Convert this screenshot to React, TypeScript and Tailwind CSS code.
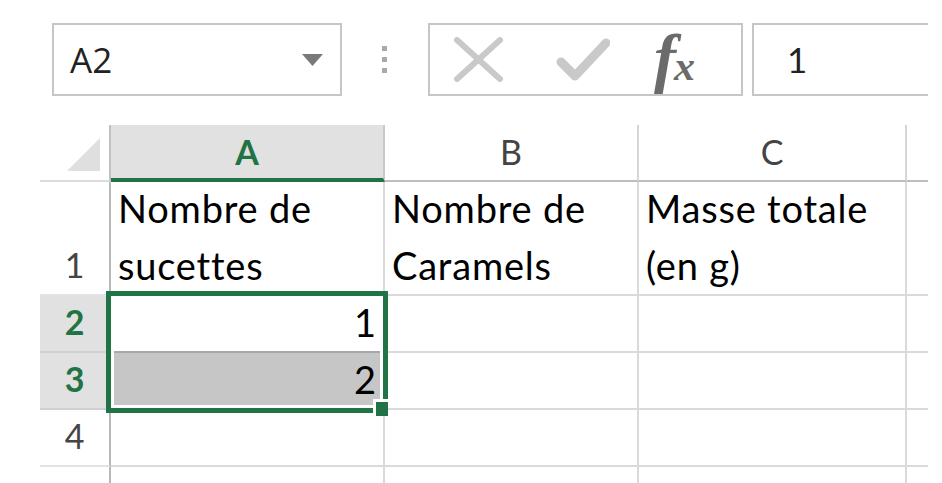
const cellFont = { fontFamily: "Lato, 'Noto Sans', sans-serif" };

function NameBox() {
  return (
    <div className="ml-[52px] flex h-[73px] w-[290px] shrink-0 items-center justify-between border-2 border-[#c6c6c6] pl-[16px] pr-[17px]">
      <span className="text-[35px] leading-none text-[#222]" style={{ fontFamily: "'Open Sans', sans-serif" }}>
        A2
      </span>
      <svg width="21" height="12" viewBox="0 0 21 12">
        <path d="M0 0h21l-10.5 12z" fill="#7a7a7a" />
      </svg>
    </div>
  );
}

function Grip() {
  return (
    <div className="ml-[40px] flex shrink-0 flex-col gap-[6px]">
      <span className="h-[5px] w-[5px] bg-[#a9a9a9]" />
      <span className="h-[5px] w-[5px] bg-[#a9a9a9]" />
      <span className="h-[5px] w-[5px] bg-[#a9a9a9]" />
    </div>
  );
}

function FormulaButtons() {
  return (
    <div className="ml-[41px] flex h-[73px] w-[315px] shrink-0 items-center border-2 border-[#c6c6c6] pl-[24px]">
      <svg width="49" height="45" viewBox="0 0 49 45">
        <path d="M3 3L46 42M46 3L3 42" stroke="#c9c9c9" strokeWidth="6" strokeLinecap="round" />
      </svg>
      <svg className="ml-[53px]" width="54" height="43" viewBox="0 0 54 43">
        <path d="M5 24L19 38L50 5" stroke="#c9c9c9" strokeWidth="9" fill="none" strokeLinejoin="round" strokeLinecap="round" />
      </svg>
      <span
        className="ml-[44px] flex translate-y-[-2px] items-baseline font-bold italic leading-none text-[#6b6b6b]"
        style={{ fontFamily: "'Liberation Serif', serif" }}
      >
        <span className="text-[66px]">f</span>
        <span className="ml-[-2px] text-[42px]">x</span>
      </span>
    </div>
  );
}

function FormulaInput() {
  return (
    <div className="ml-[9px] flex h-[73px] w-[400px] shrink-0 items-center border-2 border-[#c6c6c6] pl-[33px]">
      <span className="text-[35px] leading-none text-[#222]" style={cellFont}>
        1
      </span>
    </div>
  );
}

function ColHeader({ label, active, w }: { label: string; active?: boolean; w: string }) {
  return (
    <div
      className={
        active
          ? `${w} flex shrink-0 items-end justify-center border-r-2 border-b-4 border-r-[#c9c9c9] border-b-[#217346] bg-[#e1e1e1] pb-[9px] font-bold text-[#217346]`
          : `${w} flex shrink-0 items-end justify-center border-r-2 border-b-2 border-r-[#d6d6d6] border-b-[#bdbdbd] pb-[11px] text-[#444]`
      }
    >
      <span className="text-[34px] leading-none">{label}</span>
    </div>
  );
}

function RowHeader({ n, active, h }: { n?: number; active?: boolean; h: string }) {
  return (
    <div
      className={
        active
          ? `${h} flex w-[71px] shrink-0 items-end justify-center border-r-2 border-b-2 border-r-[#b8b8b8] border-b-[#d0d0d0] bg-[#e1e1e1] pb-[12px] font-bold text-[#217346]`
          : `${h} flex w-[71px] shrink-0 items-end justify-center border-r-2 border-b-2 border-r-[#b8b8b8] border-b-[#e3e3e3] pb-[12px] text-[#444]`
      }
    >
      <span className="text-[34px] leading-none">{n}</span>
    </div>
  );
}

function TextCell({ w, lines }: { w: string; lines: string[] }) {
  return (
    <div className={`${w} flex h-[114px] shrink-0 flex-col justify-end border-r-2 border-b-2 border-[#dadada] pl-[7px]`}>
      {lines.map((l) => (
        <span key={l} className="whitespace-nowrap text-[38px] leading-[57px] tracking-[0.8px] text-black">
          {l}
        </span>
      ))}
    </div>
  );
}

function EmptyCells() {
  return (
    <>
      <div className="h-[57px] w-[254px] shrink-0 border-r-2 border-b-2 border-[#dadada]" />
      <div className="h-[57px] w-[268px] shrink-0 border-r-2 border-b-2 border-[#dadada]" />
      <div className="h-[57px] flex-1 border-b-2 border-[#dadada]" />
    </>
  );
}

export default function App() {
  return (
    <div className="h-[483px] w-[942px] overflow-hidden bg-white" style={cellFont}>
      <div className="w-[928px] overflow-hidden">
        <div className="flex h-[96px] items-center pt-[23px]">
          <NameBox />
          <Grip />
          <FormulaButtons />
          <FormulaInput />
        </div>

        <div className="relative ml-[40px] mt-[29px] h-[358px] w-[888px] overflow-hidden">
          {/* column headers */}
          <div className="flex h-[57px]">
            <div className="flex w-[71px] shrink-0 items-end justify-end border-r-2 border-b-2 border-r-[#c0c0c0] border-b-[#dcdcdc] pb-[9px] pr-[9px]">
              <svg width="33" height="33" viewBox="0 0 33 33">
                <path d="M33 0V33H0z" fill="#dfdfdf" />
              </svg>
            </div>
            <ColHeader label="A" active w="w-[274px]" />
            <ColHeader label="B" w="w-[254px]" />
            <ColHeader label="C" w="w-[268px]" />
            <div className="flex-1 border-b-2 border-[#bdbdbd]" />
          </div>

          {/* row 1 */}
          <div className="flex">
            <RowHeader n={1} h="h-[114px]" />
            <TextCell w="w-[274px]" lines={["Nombre de", "sucettes"]} />
            <TextCell w="w-[254px]" lines={["Nombre de", "Caramels"]} />
            <TextCell w="w-[268px]" lines={["Masse totale", "(en g)"]} />
            <div className="h-[114px] flex-1 border-b-2 border-[#dadada]" />
          </div>

          {/* row 2 */}
          <div className="flex">
            <RowHeader n={2} active h="h-[57px]" />
            <div className="flex h-[57px] w-[274px] shrink-0 items-end justify-end border-r-2 border-b-2 border-r-[#dadada] border-b-[#a8a8a8] pr-[7px]">
              <span className="text-[38px] leading-[57px] text-black">1</span>
            </div>
            <EmptyCells />
          </div>

          {/* row 3 */}
          <div className="flex">
            <RowHeader n={3} active h="h-[57px]" />
            <div className="flex h-[57px] w-[274px] shrink-0 items-end justify-end border-r-2 border-b-2 border-[#dadada] bg-[#c6c6c6] pr-[7px]">
              <span className="text-[38px] leading-[57px] text-black">2</span>
            </div>
            <EmptyCells />
          </div>

          {/* row 4 */}
          <div className="flex">
            <RowHeader n={4} h="h-[57px]" />
            <div className="h-[57px] w-[274px] shrink-0 border-r-2 border-b-2 border-[#dadada]" />
            <EmptyCells />
          </div>

          {/* row 5, only its top edge shows */}
          <div className="flex">
            <RowHeader h="h-[57px]" />
            <div className="h-[57px] w-[274px] shrink-0 border-r-2 border-b-2 border-[#dadada]" />
            <EmptyCells />
          </div>

          {/* selection A2:A3 */}
          <div className="absolute left-[66px] top-[166px] h-[122px] w-[282px] border-[5px] border-[#217346] shadow-[inset_0_0_0_3px_#fff]" />
          <div className="absolute left-[333px] top-[274px] h-[17px] w-[15px] bg-white pl-[3px] pt-[3px]">
            <div className="h-[14px] w-[12px] bg-[#217346]" />
          </div>
        </div>
      </div>
    </div>
  );
}
